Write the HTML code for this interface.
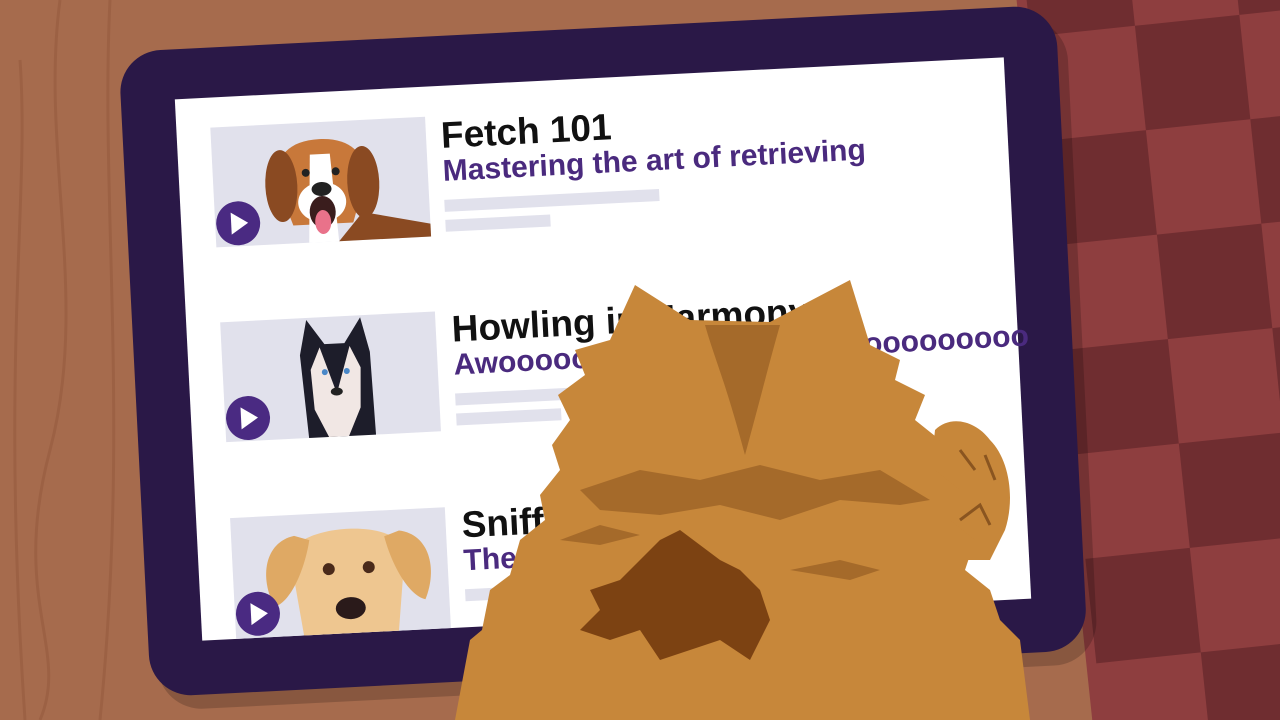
<!DOCTYPE html>
<html><head><meta charset="utf-8"><style>
html,body{margin:0;padding:0;width:1280px;height:720px;overflow:hidden;background:#a4694c}
svg{display:block;overflow:hidden}
text{font-family:"Liberation Sans",sans-serif;font-weight:bold}
</style></head><body>
<svg width="1280" height="720" viewBox="0 0 1280 720" xmlns="http://www.w3.org/2000/svg">
<defs><clipPath id="c"><rect width="1280" height="720"/></clipPath></defs>
<g clip-path="url(#c)">
<rect width="1280" height="720" fill="#a66b4d"/>
<g stroke="#93583d" stroke-width="3" fill="none" opacity="0.5">
<path d="M60 0 C40 150 90 300 50 450 S70 650 40 720"/>
<path d="M20 60 C30 200 0 350 25 720"/>
<path d="M110 0 C100 200 130 420 100 720"/>
</g>
<g transform="rotate(-6 1160 360)">
<rect x="1055" y="-80" width="400" height="900" fill="#8e3e3f"/>
<g fill="#6f2d30">
<rect x="1065" y="-80" width="105" height="105"/><rect x="1275" y="-80" width="105" height="105"/>
<rect x="1170" y="25" width="105" height="105"/><rect x="1380" y="25" width="105" height="105"/>
<rect x="1065" y="130" width="105" height="105"/><rect x="1275" y="130" width="105" height="105"/>
<rect x="1170" y="235" width="105" height="105"/><rect x="1380" y="235" width="105" height="105"/>
<rect x="1065" y="340" width="105" height="105"/><rect x="1275" y="340" width="105" height="105"/>
<rect x="1170" y="445" width="105" height="105"/><rect x="1380" y="445" width="105" height="105"/>
<rect x="1065" y="550" width="105" height="105"/><rect x="1275" y="550" width="105" height="105"/>
<rect x="1170" y="655" width="105" height="105"/>
</g>
</g>
<g transform="rotate(-2.9 603 349)">
<rect x="142" y="40" width="940" height="648" rx="44" fill="#000" opacity="0.18"/>
<rect x="134" y="28" width="938" height="646" rx="42" fill="#2a1847"/>
<rect x="188" y="78" width="830" height="542" fill="#fff"/>
<rect x="222" y="108" width="215" height="120" fill="#e1e1ec"/>
<g>
<path d="M330 125 C300 125 285 140 285 165 L300 210 L360 210 L375 165 C375 140 360 125 330 125Z" fill="#c8783a"/>
<ellipse cx="290" cy="170" rx="16" ry="36" fill="#8a4a22"/>
<ellipse cx="372" cy="170" rx="16" ry="36" fill="#8a4a22"/>
<path d="M320 140 L340 140 L345 228 L315 228Z" fill="#fff"/>
<ellipse cx="330" cy="188" rx="24" ry="20" fill="#fff"/>
<path d="M370 200 L437 215 L437 228 L345 228Z" fill="#8a4a22"/>
<ellipse cx="330" cy="175" rx="10" ry="7" fill="#222"/>
<ellipse cx="330" cy="198" rx="13" ry="16" fill="#3a1d1d"/>
<ellipse cx="330" cy="208" rx="8" ry="12" fill="#e9728a"/>
<circle cx="315" cy="158" r="4" fill="#222"/><circle cx="345" cy="158" r="4" fill="#222"/>
</g>
<circle cx="245" cy="205" r="22" fill="#4a2a82"/>
<path d="M238 194 L255 205 L238 216Z" fill="#fff"/>
<text x="452" y="140" font-size="37" fill="#111">Fetch 101</text>
<text x="452" y="173" font-size="30" fill="#4a2a7e">Mastering the art of retrieving</text>
<rect x="452" y="192" width="215" height="12" fill="#e1e1ec"/>
<rect x="452" y="212" width="105" height="12" fill="#e1e1ec"/>
<rect x="222" y="303" width="215" height="120" fill="#e1e1ec"/>
<g>
<path d="M305 423 L300 340 L308 305 L325 330 L345 330 L362 305 L370 340 L372 423Z" fill="#1d1d2a"/>
<path d="M320 333 L335 380 L350 333 L360 355 L358 395 L345 423 L325 423 L312 395 L310 355Z" fill="#f1e7e4"/>
<circle cx="324" cy="358" r="3" fill="#4a88c8"/><circle cx="346" cy="358" r="3" fill="#4a88c8"/>
<ellipse cx="335" cy="378" rx="6" ry="4" fill="#222"/>
</g>
<circle cx="245" cy="400" r="22" fill="#4a2a82"/>
<path d="M238 389 L255 400 L238 411Z" fill="#fff"/>
<text x="453" y="334" font-size="37" fill="#111">Howling in Harmony</text>
<text x="453" y="367" font-size="30" fill="#4a2a7e">Awooooooooooooooooooooooooooooo</text>
<rect x="453" y="386" width="215" height="12" fill="#e1e1ec"/>
<rect x="453" y="406" width="105" height="12" fill="#e1e1ec"/>
<rect x="222" y="499" width="215" height="121" fill="#e1e1ec"/>
<g>
<path d="M290 620 L280 540 C285 510 385 505 395 540 L385 620Z" fill="#eec690"/>
<path d="M285 520 C255 525 248 560 262 590 C280 585 295 550 300 525Z" fill="#dfa964"/>
<path d="M390 520 C420 525 427 560 413 590 C395 585 380 550 375 525Z" fill="#dfa964"/>
<circle cx="318" cy="555" r="6" fill="#4a2a1a"/><circle cx="358" cy="555" r="6" fill="#4a2a1a"/>
<ellipse cx="338" cy="595" rx="15" ry="11" fill="#2a1a1a"/>
</g>
<circle cx="245" cy="596" r="22" fill="#4a2a82"/>
<path d="M238 585 L255 596 L238 607Z" fill="#fff"/>
<text x="453" y="530" font-size="37" fill="#111">Sniffing Success</text>
<text x="453" y="563" font-size="30" fill="#4a2a7e">The nose knows</text>
<rect x="453" y="582" width="215" height="12" fill="#e1e1ec"/>
</g>
<g>
<path d="M935 430 C950 415 975 420 990 440 C1010 460 1015 500 1005 530 L990 560 L950 560 L930 480Z" fill="#c7873a"/>
<path d="M455 720 L470 640 L482 630 L490 590 L510 575 L520 540 L545 520 L540 495 L560 470 L552 445 L570 420 L558 395 L585 375 L575 350 L610 340 L635 285 L690 320 L770 322 L850 280 L870 345 L900 360 L895 380 L925 395 L915 420 L940 440 L935 470 L960 490 L950 520 L975 540 L965 570 L990 590 L1000 620 L1020 640 L1030 720Z" fill="#c7873a"/>
<path d="M705 325 C715 360 725 380 745 455 C760 400 770 360 780 325Z" fill="#a56a2a"/>
<path d="M580 490 L640 470 L700 480 L760 465 L820 480 L880 470 L930 500 L900 505 L840 500 L780 520 L720 505 L660 515 L600 510Z" fill="#a56a2a"/>
<path d="M640 560 L620 580 L590 590 L600 610 L580 630 L610 640 L640 630 L660 660 L690 650 L720 640 L750 660 L770 620 L760 590 L740 570 L720 560 L700 545 L680 530 L660 540Z" fill="#7c4212"/>
<path d="M560 540 L600 525 L640 535 L600 545Z" fill="#a56a2a"/>
<path d="M790 570 L840 560 L880 570 L850 580Z" fill="#a56a2a"/>
<path d="M960 450 L975 470 M985 455 L995 480 M960 520 L980 505 L990 525" stroke="#8a5520" stroke-width="3" fill="none"/>
</g>
</g>
</svg>
</body></html>
